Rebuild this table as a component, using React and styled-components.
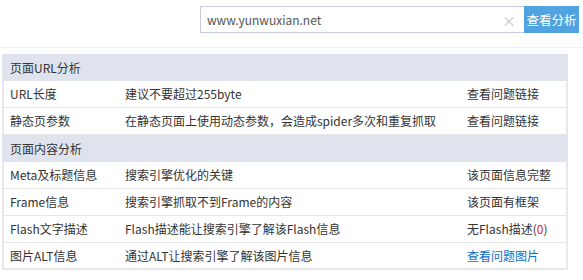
import React from 'react'
import styled, { createGlobalStyle } from 'styled-components'

const GlobalStyle = createGlobalStyle`
  body {
    margin: 0;
    background: #fff;
    font-family: "Noto Sans CJK SC", "Noto Sans", sans-serif;
    color: #333;
  }
`

const TopBar = styled.div`
  display: flex;
  justify-content: flex-end;
  padding: 6px 4px 0 0;
  height: 41px;
  border-bottom: 1px solid #f0f0f0;
`

const SearchBox = styled.div`
  display: flex;
  height: 27px;
`

const Input = styled.div`
  box-sizing: border-box;
  width: 324px;
  height: 27px;
  border: 1px solid #c7cde0;
  border-right: none;
  display: flex;
  align-items: center;
  justify-content: space-between;
  padding: 0 8px 0 6px;
  font-size: 12px;
  color: #555;
`

const Clear = styled.span`
  color: #c8c8c8;
  font-size: 14px;
`

const SearchButton = styled.div`
  width: 55px;
  height: 27px;
  background: #4fa3e0;
  color: #fff;
  font-size: 12.5px;
  display: flex;
  align-items: center;
  justify-content: center;
`

const Table = styled.div`
  width: 566px;
  margin: 6px 0 0 2px;
`

const SectionRow = styled.div`
  height: 27px;
  line-height: 27px;
  background: #dfe3ee;
  padding-left: 8px;
  font-size: 12px;
`

const Row = styled.div`
  box-sizing: border-box;
  display: grid;
  grid-template-columns: 119px 342px 1fr;
  height: 27px;
  line-height: 26px;
  font-size: 12px;
  border-left: 2px solid #e8e8e8;
  border-right: 2px solid #e8e8e8;
  border-bottom: ${p => (p.last ? '2px solid #e8e8e8' : '1px solid #e6e6e6')};
`

const Cell = styled.div`
  padding-left: ${p => p.pad || 6}px;
  white-space: nowrap;
  overflow: hidden;
  color: ${p => (p.link ? '#0a6fc5' : '#333')};
`

const Red = styled.span`
  color: #e8202a;
`

const sections = [
  {
    title: '页面URL分析',
    rows: [
      ['URL长度', '建议不要超过255byte', '查看问题链接'],
      ['静态页参数', '在静态页面上使用动态参数，会造成spider多次和重复抓取', '查看问题链接'],
    ],
  },
  {
    title: '页面内容分析',
    rows: [
      ['Meta及标题信息', '搜索引擎优化的关键', '该页面信息完整'],
      ['Frame信息', '搜索引擎抓取不到Frame的内容', '该页面有框架'],
      ['Flash文字描述', 'Flash描述能让搜索引擎了解该Flash信息', <>无Flash描述(<Red>0</Red>)</>],
      ['图片ALT信息', '通过ALT让搜索引擎了解该图片信息', '查看问题图片', true],
    ],
  },
]

export default function App() {
  return (
    <>
      <GlobalStyle />
      <TopBar>
        <SearchBox>
          <Input>
            <span>www.yunwuxian.net</span>
            <Clear>×</Clear>
          </Input>
          <SearchButton>查看分析</SearchButton>
        </SearchBox>
      </TopBar>
      <Table>
        {sections.map((s, si) => (
          <React.Fragment key={s.title}>
            <SectionRow>{s.title}</SectionRow>
            {s.rows.map((r, ri) => (
              <Row key={ri} last={si === sections.length - 1 && ri === s.rows.length - 1}>
                <Cell>{r[0]}</Cell>
                <Cell pad={2}>{r[1]}</Cell>
                <Cell pad={2} link={r[3]}>{r[2]}</Cell>
              </Row>
            ))}
          </React.Fragment>
        ))}
      </Table>
    </>
  )
}
